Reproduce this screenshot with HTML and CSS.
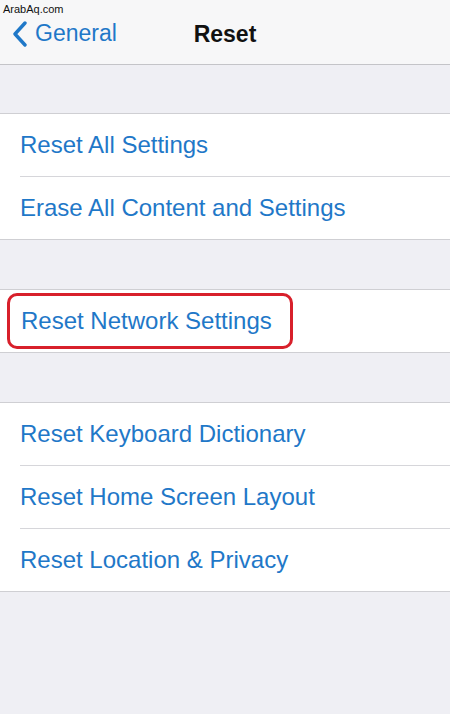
FILE: index.html
```html
<!DOCTYPE html>
<html lang="en">
<head>
    <meta charset="UTF-8">
    <meta name="viewport" content="width=device-width, initial-scale=1.0">
    <title>Reset</title>
    <link rel="stylesheet" href="styles.css">
</head>
<body>
    <div class="screen">
        <header class="navbar">
            <span class="watermark">ArabAq.com</span>
            <a class="back" href="#">
                <svg class="chevron" width="16" height="26" viewBox="0 0 16 26">
                    <path d="M13 2 L3 13 L13 24" fill="none" stroke="#1f78c8" stroke-width="3.4" stroke-linecap="round" stroke-linejoin="round"/>
                </svg>
                <span>General</span>
            </a>
            <h1 class="title">Reset</h1>
        </header>

        <ul class="group">
            <li class="row">Reset All Settings</li>
            <li class="row">Erase All Content and Settings</li>
        </ul>

        <ul class="group">
            <li class="row"><span class="highlight">Reset Network Settings</span></li>
        </ul>

        <ul class="group">
            <li class="row">Reset Keyboard Dictionary</li>
            <li class="row">Reset Home Screen Layout</li>
            <li class="row">Reset Location &amp; Privacy</li>
        </ul>
    </div>
</body>
</html>
```

FILE: styles.css
```css
body {
    margin: 0;
    font-family: "Liberation Sans", Arial, sans-serif;
    background: #efeff4;
}
.screen {
    width: 450px;
    height: 714px;
    background: #efeff4;
    overflow: hidden;
}
.navbar {
    position: relative;
    height: 64px;
    background: #f7f7f8;
    border-bottom: 1px solid #c4c4c8;
    display: flex;
    align-items: center;
    justify-content: center;
}
.watermark {
    position: absolute;
    left: 3px;
    top: 3px;
    font-size: 11px;
    color: #111;
}
.back {
    position: absolute;
    left: 12px;
    top: 20px;
    display: flex;
    align-items: center;
    gap: 7px;
    color: #1f78c8;
    text-decoration: none;
    font-size: 23px;
}
.chevron { display: block; }
.title {
    margin: 0;
    margin-top: 5px;
    font-size: 23px;
    font-weight: bold;
    color: #111;
}
.group {
    list-style: none;
    margin: 49px 0 0;
    padding: 0 0 0 20px;
    background: #fff;
    border-top: 1px solid #cfcfd3;
    border-bottom: 1px solid #cfcfd3;
}
.navbar + .group { margin-top: 48px; }
.row {
    height: 63px;
    display: flex;
    align-items: center;
    color: #1f78c8;
    font-size: 24px;
    border-bottom: 1px solid #d6d6da;
    box-sizing: border-box;
}
.row:last-child { border-bottom: none; height: 62px; }
.highlight {
    margin-left: -13px;
    padding: 11px 18px 11px 11px;
    border: 3px solid #d8202b;
    border-radius: 10px;
}
```
